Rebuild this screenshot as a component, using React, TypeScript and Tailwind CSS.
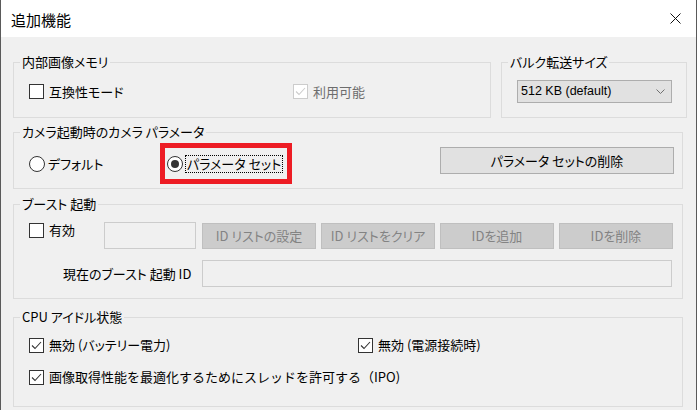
import type { ReactNode } from "react";

function CheckBox({ checked = false, disabled = false }: { checked?: boolean; disabled?: boolean }) {
  const stroke = disabled ? "#cccccc" : "#333333";
  return (
    <span
      className={`flex h-[15px] w-[15px] shrink-0 items-center justify-center border bg-white ${
        disabled ? "border-[#cccccc]" : "border-[#333333]"
      }`}
    >
      {checked && (
        <svg width="13" height="13" viewBox="0 0 13 13">
          <polyline points="2,6.5 5,9.5 11,3" fill="none" stroke={stroke} strokeWidth="1.1" />
        </svg>
      )}
    </span>
  );
}

function Radio({ checked = false }: { checked?: boolean }) {
  return (
    <span className="flex h-[16px] w-[16px] shrink-0 items-center justify-center rounded-full border border-[#333333] bg-white">
      {checked && <span className="h-[8px] w-[8px] rounded-full bg-[#333333]" />}
    </span>
  );
}

function Group({ title, className, children }: { title: string; className: string; children: ReactNode }) {
  return (
    <fieldset className={`border border-[#dcdcdc] px-0 ${className}`}>
      <legend className="ml-[6px] px-[2px] text-[13px] leading-[18px]">{title}</legend>
      {children}
    </fieldset>
  );
}

function DisabledButton({ label }: { label: string }) {
  return (
    <div className="mt-[1px] flex h-[26px] w-[114px] items-center justify-center border border-[#bfbfbf] bg-[#cccccc] text-[13px] text-[#838383]">
      {label}
    </div>
  );
}

export default function App() {
  return (
    <div className="flex h-[410px] w-[697px] flex-col overflow-hidden border-x border-[#5a5a5a] bg-[#f0f0f0] font-['Noto_Sans_CJK_JP',sans-serif] text-black [font-feature-settings:'palt']">
      {/* title bar */}
      <div className="flex h-[37px] shrink-0 items-center justify-between bg-white pl-[10px] pr-[15px]">
        <span className="pt-[3px] text-[15px] leading-[20px]">追加機能</span>
        <svg width="11" height="11" viewBox="0 0 11 11">
          <path d="M0.5 0.5 L10.5 10.5 M10.5 0.5 L0.5 10.5" stroke="#111" strokeWidth="1" />
        </svg>
      </div>

      <div className="flex flex-col pl-[12px]">
        <div className="mt-[16px] flex gap-[10px]">
          <Group title="内部画像メモリ" className="h-[65px] w-[478px]">
            <div className="mt-[12px] flex h-[17px] items-center pl-[15px] text-[13px] leading-[17px]">
              <label className="flex w-[264px] items-center">
                <CheckBox />
                <span className="ml-[5px]">互換性モード</span>
              </label>
              <label className="flex items-center">
                <CheckBox checked disabled />
                <span className="ml-[5px] text-[#6d6d6d]">利用可能</span>
              </label>
            </div>
          </Group>
          <Group title="バルク転送サイズ" className="h-[65px] w-[186px]">
            <div className="mt-[9px] pl-[15px]">
              <div className="flex h-[23px] w-[155px] items-center justify-between border border-[#adadad] bg-[#e1e1e1] pl-[3px] pr-[6px] font-['Liberation_Sans',sans-serif] text-[12.5px]">
                <span>512 KB (default)</span>
                <svg width="9" height="6" viewBox="0 0 9 6">
                  <polyline points="0.5,0.5 4.5,4.5 8.5,0.5" fill="none" stroke="#707070" strokeWidth="1" />
                </svg>
              </div>
            </div>
          </Group>
        </div>

        <Group title="カメラ起動時のカメラ パラメータ" className="mt-[5px] h-[66px] w-[670px]">
          <div className="mt-[6px] flex items-start pl-[15px] text-[13px]">
            <label className="mt-[8px] flex h-[18px] w-[138px] items-center">
              <Radio />
              <span className="ml-[3px]">デフォルト</span>
            </label>
            <label className="relative mt-[8px] flex h-[18px] w-[273px] items-center">
              <Radio checked />
              <span className="ml-[2px] flex h-[18px] items-center border border-dotted border-black px-[1px] leading-[16px]">
                パラメータ セット
              </span>
              {/* red annotation frame */}
              <span className="pointer-events-none absolute left-[-7px] top-[-12px] h-[41px] w-[132px] border-[5px] border-[#ed1c24]" />
            </label>
            <div className="flex h-[27px] w-[234px] items-center justify-center border border-[#adadad] bg-[#e1e1e1]">
              パラメータ セットの削除
            </div>
          </div>
        </Group>

        <Group title="ブースト 起動" className="mt-[6px] h-[104px] w-[670px]">
          <div className="mt-[9px] flex items-start pl-[15px] text-[13px]">
            <label className="flex h-[16px] w-[75px] items-center">
              <CheckBox />
              <span className="ml-[5px]">有効</span>
            </label>
            <div className="h-[27px] w-[92px] border border-[#cccccc]" />
            <div className="ml-[6px] flex gap-[5px]">
              <DisabledButton label="ID リストの設定" />
              <DisabledButton label="ID リストをクリア" />
              <DisabledButton label="IDを追加" />
              <DisabledButton label="IDを削除" />
            </div>
          </div>
          <div className="mt-[11px] flex items-center pl-[49px] text-[13px]">
            <span className="w-[139px]">現在のブースト 起動 ID</span>
            <div className="h-[27px] w-[470px] border border-[#cccccc]" />
          </div>
        </Group>

        <Group title="CPU アイドル状態" className="mt-[9px] h-[99px] w-[670px]">
          <div className="mt-[11px] flex h-[16px] items-center pl-[15px] text-[13px]">
            <label className="flex w-[329px] items-center">
              <CheckBox checked />
              <span className="ml-[5px]">無効 (バッテリー電力)</span>
            </label>
            <label className="flex items-center">
              <CheckBox checked />
              <span className="ml-[5px]">無効 (電源接続時)</span>
            </label>
          </div>
          <div className="mt-[16px] flex h-[16px] items-center pl-[15px] text-[13px]">
            <label className="flex items-center">
              <CheckBox checked />
              <span className="ml-[5px] [font-feature-settings:normal]">
                画像取得性能を最適化するためにスレッドを許可する（IPO)
              </span>
            </label>
          </div>
        </Group>
      </div>
    </div>
  );
}
